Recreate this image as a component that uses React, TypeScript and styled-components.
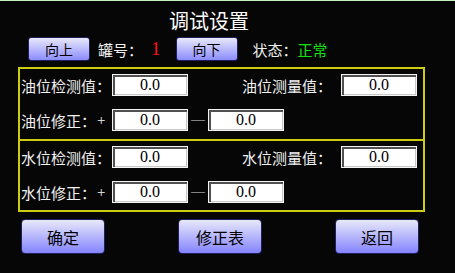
import React from "react";
import styled, { createGlobalStyle } from "styled-components";

const GlobalStyle = createGlobalStyle`
  html, body {
    margin: 0;
    padding: 0;
    background: #060606;
  }
`;

const FONT = `"Liberation Serif", "Noto Sans CJK SC", serif`;

// 油位 / 水位 两块设置区
const sections = [
  { name: "油位", check: "0.0", measure: "0.0", plus: "0.0", minus: "0.0" },
  { name: "水位", check: "0.0", measure: "0.0", plus: "0.0", minus: "0.0" },
];

function App() {
  return (
    <Screen>
      <GlobalStyle />
      <Title>调试设置</Title>
      <TopBar>
        <NavButton>向上</NavButton>
        <Label>罐号：</Label>
        <TankNo>1</TankNo>
        <NavButton>向下</NavButton>
        <Label $ml={7}>状态：</Label>
        <Status>正常</Status>
      </TopBar>
      <Panel>
        {sections.map((s, i) => (
          <Section key={s.name} $last={i === sections.length - 1}>
            <Row>
              <RowLabel>{s.name}检测值：</RowLabel>
              <Value>{s.check}</Value>
              <RightLabel>{s.name}测量值：</RightLabel>
              <Value>{s.measure}</Value>
            </Row>
            <Row>
              <RowLabel>
                {s.name}修正：<Sign>+</Sign>
              </RowLabel>
              <Value>{s.plus}</Value>
              <Dash>—</Dash>
              <Value $ml={0}>{s.minus}</Value>
            </Row>
          </Section>
        ))}
      </Panel>
      <BottomBar>
        <BigButton>确定</BigButton>
        <BigButton>修正表</BigButton>
        <BigButton>返回</BigButton>
      </BottomBar>
    </Screen>
  );
}
export default App;

const Screen = styled.div`
  width: 455px;
  height: 272px;
  border-top: 1px solid #c4f0c4;
  background: #060606;
  font-family: ${FONT};
  color: #f2f2f2;
  overflow: hidden;
`;

const Title = styled.div`
  padding: 9px 0 0 169px;
  height: 26px;
  font-size: 20px;
  line-height: 24px;
  color: #ffffff;
`;

const TopBar = styled.div`
  display: flex;
  align-items: center;
  height: 24px;
  padding-left: 28px;
  margin-top: 1px;
`;

const NavButton = styled.div`
  width: 62px;
  height: 24px;
  box-sizing: border-box;
  display: flex;
  align-items: center;
  justify-content: center;
  border: 1px solid #20205a;
  border-radius: 3px;
  background: linear-gradient(#e8e8fa, #8c8cff);
  color: #000;
  font-size: 14px;
  margin-right: 8px;
`;

const Label = styled.span<{ $ml?: number }>`
  font-size: 15px;
  color: #f0f0f0;
  margin-left: ${(p) => p.$ml ?? 0}px;
`;

const TankNo = styled.span`
  font-size: 19px;
  color: #ff1010;
  margin: 0 15px 0 8px;
`;

const Status = styled.span`
  font-size: 15px;
  color: #10e010;
`;

const Panel = styled.div`
  margin: 6px 0 0 18px;
  width: 407px;
`;

const Section = styled.div<{ $last: boolean }>`
  box-sizing: border-box;
  height: ${(p) => (p.$last ? 73 : 72)}px;
  border: 2px solid #cccc10;
  border-bottom: ${(p) => (p.$last ? "2px solid #cccc10" : "none")};
  padding: 5px 0 0 1px;
  display: flex;
  flex-direction: column;
  gap: 13px;
`;

const Row = styled.div`
  display: flex;
  align-items: center;
  height: 22px;
`;

const RowLabel = styled.span`
  width: 82px;
  flex-shrink: 0;
  font-size: 15px;
  white-space: nowrap;
  display: flex;
  align-items: center;
`;

const Sign = styled.span`
  margin-left: 1px;
  font-size: 15px;
`;

const RightLabel = styled.span`
  width: 144px;
  font-size: 15px;
  text-align: right;
`;

const Dash = styled.span`
  width: 20px;
  text-align: center;
  font-size: 14px;
  color: #d8d8d8;
`;

const Value = styled.div<{ $ml?: number }>`
  width: 76px;
  height: 22px;
  box-sizing: border-box;
  background: #fff;
  border: 1px solid #f4f4f4;
  box-shadow: inset 2px 2px 0 #505050, inset -1px -1px 0 #c8c8c8;
  color: #000;
  font-size: 16px;
  display: flex;
  align-items: center;
  justify-content: center;
  margin-left: ${(p) => p.$ml ?? 9}px;
`;

const BottomBar = styled.div`
  display: flex;
  padding-left: 21px;
  margin-top: 7px;
  gap: 73px;
`;

const BigButton = styled.div`
  width: 84px;
  height: 35px;
  box-sizing: border-box;
  display: flex;
  align-items: center;
  justify-content: center;
  border: 1px solid #20205a;
  border-radius: 4px;
  background: linear-gradient(#e8e8fa, #8484ff);
  color: #000;
  font-size: 16px;
`;
